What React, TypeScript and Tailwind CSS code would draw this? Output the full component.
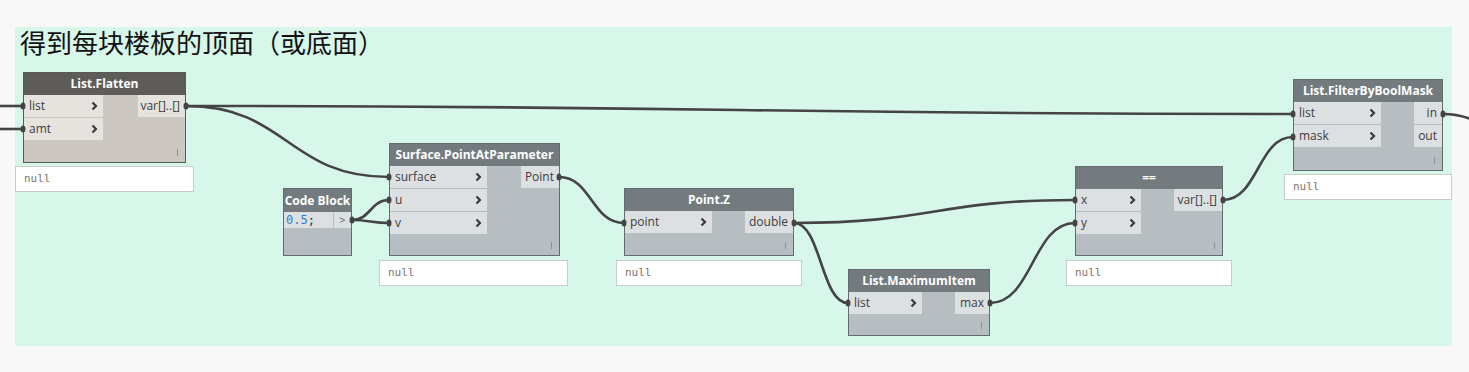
import React from "react";

type Theme = "grey" | "brown";

const themes = {
  grey: { head: "bg-[#737b7f]", body: "bg-[#b6bec1]", port: "bg-[#dde0e2]", border: "border-[#646b6e]" },
  brown: { head: "bg-[#5e5c59]", body: "bg-[#ccc8c1]", port: "bg-[#e6e3de]", border: "border-[#5a5855]" },
};

function Chevron() {
  return (
    <svg width="7" height="10" viewBox="0 0 7 10" className="shrink-0">
      <polyline points="1.5,1.5 5,5 1.5,8.5" fill="none" stroke="#3a3a3a" strokeWidth="2.2" />
    </svg>
  );
}

type NodeProps = {
  x: number;
  y: number;
  w: number;
  h: number;
  title: string;
  inputs: string[];
  outputs: string[];
  inW: number;
  outW: number;
  theme?: Theme;
};

function Node({ x, y, w, h, title, inputs, outputs, inW, outW, theme = "grey" }: NodeProps) {
  const t = themes[theme];
  return (
    <div
      className={`absolute flex flex-col border ${t.border} ${t.body}`}
      style={{ left: x, top: y, width: w, height: h }}
    >
      <div className={`${t.head} h-[22px] flex items-center justify-center text-white text-[12px] font-bold leading-none`}>
        {title}
      </div>
      <div className="flex justify-between">
        <div className="flex flex-col gap-px" style={{ width: inW }}>
          {inputs.map((p) => (
            <div key={p} className={`${t.port} h-[22px] flex items-center justify-between pl-[5px] pr-[5px] text-[12px] text-[#3c3c3c]`}>
              <span>{p}</span>
              <Chevron />
            </div>
          ))}
        </div>
        <div className="flex flex-col gap-px" style={{ width: outW }}>
          {outputs.map((p) => (
            <div key={p} className={`${t.port} h-[22px] flex items-center justify-end pr-[5px] text-[12px] text-[#3c3c3c]`}>
              <span>{p}</span>
            </div>
          ))}
        </div>
      </div>
      <div className="flex-1 relative">
        <div className="absolute right-[7px] bottom-[6px] w-px h-[7px] bg-[#8a9194]" />
      </div>
    </div>
  );
}

function NullBox({ x, y, w }: { x: number; y: number; w: number }) {
  return (
    <div
      className="absolute h-[26px] bg-white border border-[#c9cccd] flex items-center pl-[8px] text-[11px] text-[#7f736b]"
      style={{ left: x, top: y, width: w, fontFamily: '"DejaVu Sans Mono", monospace' }}
    >
      null
    </div>
  );
}

function wire(x1: number, y1: number, x2: number, y2: number) {
  const d = Math.max(Math.abs(x2 - x1) / 2, 18);
  return `M${x1} ${y1} C${x1 + d} ${y1} ${x2 - d} ${y2} ${x2} ${y2}`;
}

const wires: [number, number, number, number][] = [
  [186, 106, 1293, 114],
  [186, 106, 389, 177],
  [352, 220, 389, 200],
  [352, 220, 389, 223],
  [559, 177, 624, 223],
  [794, 223, 1075, 200],
  [794, 223, 848, 303],
  [990, 303, 1075, 223],
  [1223, 200, 1293, 137],
  [1443, 114, 1580, 190],
];

const inMarks: [number, number][] = [
  [23, 106],
  [23, 129],
  [389, 177],
  [389, 200],
  [389, 223],
  [624, 223],
  [848, 303],
  [1075, 200],
  [1075, 223],
  [1293, 114],
  [1293, 137],
];
const outMarks: [number, number][] = [
  [186, 106],
  [352, 220],
  [559, 177],
  [794, 223],
  [990, 303],
  [1223, 200],
  [1443, 114],
];

export default function App() {
  return (
    <div
      className="relative w-[1469px] h-[372px] bg-[#f8f8f8] overflow-hidden pt-[27px] pl-[15px]"
      style={{ fontFamily: '"Open Sans", "Noto Sans", sans-serif' }}
    >
      <div className="w-[1437px] h-[319px] bg-[#d7f7ea] pl-[5px]">
        <div
          className="text-[26px] leading-[30px] text-[#111]"
          style={{ fontFamily: '"Noto Sans CJK SC", "Noto Sans", sans-serif' }}
        >
          得到每块楼板的顶面（或底面）
        </div>
      </div>

      <Node x={23} y={72} w={163} h={91} title="List.Flatten" inputs={["list", "amt"]} outputs={["var[]..[]"]} inW={79} outW={47} theme="brown" />
      <NullBox x={15} y={166} w={179} />

      {/* Code Block */}
      <div className="absolute left-[283px] top-[188px] w-[69px] h-[68px] border border-[#646b6e] bg-[#b6bec1] flex flex-col">
        <div className="bg-[#737b7f] h-[23px] flex items-center justify-center text-white text-[12px] font-bold leading-none">
          Code Block
        </div>
        <div className="flex h-[16px]">
          <div
            className="flex-1 bg-[#dde0e2] flex items-center pl-[2px] text-[12px]"
            style={{ fontFamily: '"DejaVu Sans Mono", monospace' }}
          >
            <span className="text-[#2a7ad5]">0.5</span>
            <span className="text-[#333]">;</span>
          </div>
          <div className="w-[17px] ml-px bg-[#dde0e2] flex items-center justify-center text-[11px] text-[#555]">&gt;</div>
        </div>
      </div>

      <Node x={389} y={143} w={171} h={113} title="Surface.PointAtParameter" inputs={["surface", "u", "v"]} outputs={["Point"]} inW={97} outW={38} />
      <NullBox x={379} y={260} w={189} />

      <Node x={624} y={188} w={170} h={68} title="Point.Z" inputs={["point"]} outputs={["double"]} inW={87} outW={48} />
      <NullBox x={616} y={260} w={186} />

      <Node x={848} y={269} w={142} h={67} title="List.MaximumItem" inputs={["list"]} outputs={["max"]} inW={73} outW={34} />

      <Node x={1075} y={166} w={148} h={90} title="==" inputs={["x", "y"]} outputs={["var[]..[]"]} inW={65} outW={48} />
      <NullBox x={1066} y={260} w={166} />

      <Node x={1293} y={79} w={150} h={92} title="List.FilterByBoolMask" inputs={["list", "mask"]} outputs={["in", "out"]} inW={87} outW={28} />
      <NullBox x={1284} y={174} w={168} />

      <svg className="absolute left-0 top-0 pointer-events-none" width="1469" height="372">
        <line x1="0" y1="106" x2="23" y2="106" stroke="#444" strokeWidth="2.6" />
        <line x1="0" y1="129" x2="23" y2="129" stroke="#444" strokeWidth="2.6" />
        {wires.map(([a, b, c, d], i) => (
          <path key={i} d={wire(a, b, c, d)} fill="none" stroke="#444" strokeWidth="2.6" />
        ))}
        {inMarks.map(([x, y], i) => (
          <ellipse key={"i" + i} cx={x} cy={y} rx="2.5" ry="3.5" fill="#444" />
        ))}
        {outMarks.map(([x, y], i) => (
          <ellipse key={"o" + i} cx={x} cy={y} rx="2.5" ry="3.5" fill="#444" />
        ))}
      </svg>
    </div>
  );
}
